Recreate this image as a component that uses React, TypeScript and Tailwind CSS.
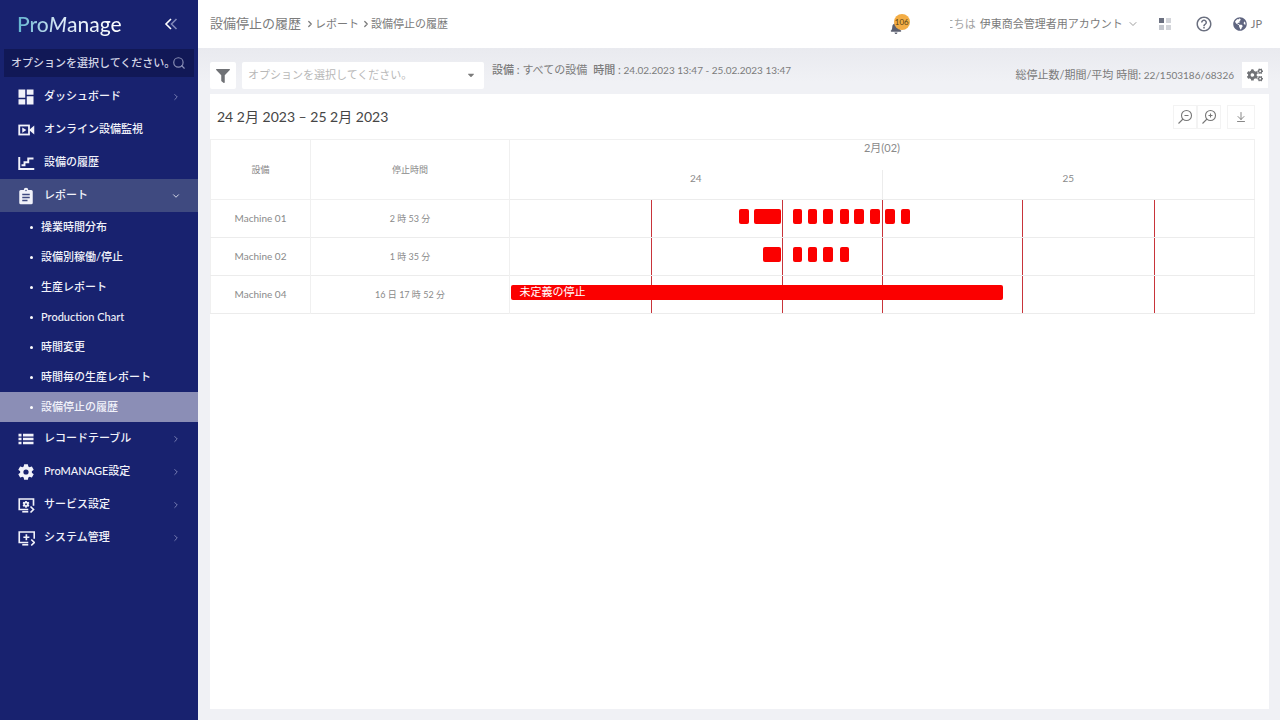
import React from 'react';
import { ArrowDownToLine, ChevronDown, ChevronRight, Search } from 'lucide-react';
import { FaBell, FaCaretDown, FaCogs, FaFilter, FaGlobeAmericas } from 'react-icons/fa';
import { MdHelpOutline } from 'react-icons/md';

type Icon = React.ComponentType<{ className?: string }>;

const DashboardIcon: Icon = ({ className }) => (
  <svg viewBox="0 0 24 24" className={className} fill="currentColor">
    <path d="M2 2h9v11H2zM13 2h9v7h-9zM2 15h9v7H2zM13 11h9v11h-9z" />
  </svg>
);

const CameraIcon: Icon = ({ className }) => (
  <svg viewBox="0 0 24 24" className={className} fill="none" stroke="currentColor" strokeWidth="2.4">
    <rect x="3" y="6" width="13" height="12" />
    <path d="M7 8.5v7l5.5-3.5z" fill="currentColor" stroke="none" />
    <path d="M16 12l7-6v12z" fill="currentColor" stroke="none" />
  </svg>
);

const StepsIcon: Icon = ({ className }) => (
  <svg viewBox="0 0 24 24" className={className} fill="none" stroke="currentColor" strokeWidth="2.6">
    <path d="M3 4v16h20" />
    <path d="M6 15h4v-4h5V6h7" />
  </svg>
);

const ClipboardIcon: Icon = ({ className }) => (
  <svg viewBox="0 0 24 24" className={className}>
    <path d="M5 4h4a3 3 0 016 0h4q2 0 2 2v15q0 2-2 2H5q-2 0-2-2V6q0-2 2-2z" fill="currentColor" />
    <path d="M7 10h10M7 14h10M7 18h7" fill="none" stroke="#3f4a80" strokeWidth="2" />
    <circle cx="12" cy="4.500" r="1" fill="#3f4a80" />
  </svg>
);

const ListIcon: Icon = ({ className }) => (
  <svg viewBox="0 0 24 24" className={className} fill="currentColor">
    <path d="M2 5h4v3.500H2zM8 5h14v3.500H8zM2 10.300h4v3.500H2zM8 10.300h14v3.500H8zM2 15.600h4v3.500H2zM8 15.600h14v3.500H8z" />
  </svg>
);

const GearIcon: Icon = ({ className }) => (
  <svg viewBox="1 1 22 22" className={className} fill="currentColor">
    <path d="M19.14 12.94c.04-.3.06-.61.06-.94s-.02-.64-.07-.94l2.03-1.58a.49.49 0 00.12-.61l-1.92-3.32a.49.49 0 00-.59-.22l-2.39.96a7 7 0 00-1.62-.94l-.36-2.54a.48.48 0 00-.48-.41h-3.84a.47.47 0 00-.47.41l-.36 2.54c-.59.24-1.13.57-1.62.94l-2.39-.96a.48.48 0 00-.59.22L2.740 8.870a.48.48 0 00.12.61l2.030 1.580a7 7 0 000 1.880l-2.030 1.580a.49.49 0 00-.12.61l1.920 3.320c.12.22.37.29.59.22l2.390-.96c.5.38 1.030.7 1.620.94l.36 2.540c.05.24.24.41.48.41h3.840c.24 0 .44-.17.47-.41l.36-2.540a7 7 0 001.620-.94l2.390.96c.22.08.47 0 .59-.22l1.920-3.320a.48.48 0 00-.12-.61zM12 15.200a3.200 3.200 0 110-6.400 3.200 3.200 0 010 6.400z" />
  </svg>
);

const ScreenGearIcon: Icon = ({ className }) => (
  <svg viewBox="0 0 24 24" className={className} fill="none" stroke="currentColor" strokeWidth="2.2">
    <path d="M15 18H3V4h19v9" />
    <path d="M7 21h8" />
    <circle cx="12" cy="11" r="2.4" strokeWidth="2.4" />
    <path d="M12 6.500v2M12 13.500v2M8 8.700l1.700 1M14.300 12.300l1.700 1M8 13.300l1.700-1M14.300 9.700l1.700-1" />
    <path d="M18 14l4 4-4 4" />
  </svg>
);

const ScreenPlusIcon: Icon = ({ className }) => (
  <svg viewBox="0 0 24 24" className={className} fill="none" stroke="currentColor" strokeWidth="2.2">
    <path d="M15 18H3V4h20v9" />
    <path d="M7 21h8" />
    <path d="M12.500 7v8M8.500 11h8" />
    <path d="M19 14l4 4-4 4" />
  </svg>
);

const ZoomIcon = ({ plus }: { plus?: boolean }) => (
  <svg viewBox="0 0 16 16" className="h-4 w-4" fill="none" stroke="currentColor" strokeWidth="1.1">
    <circle cx="9.500" cy="6.500" r="5" />
    <path d="M6 10l-4.500 4.500M7.500 6.500h4" />
    {plus && <path d="M9.500 4.500v4" />}
  </svg>
);

interface MenuItem {
  icon: Icon;
  label: string;
  arrow?: boolean;
  children?: string[];
}

const menu: MenuItem[] = [
  { icon: DashboardIcon, label: 'ダッシュボード', arrow: true },
  { icon: CameraIcon, label: 'オンライン設備監視' },
  { icon: StepsIcon, label: '設備の履歴' },
  {
    icon: ClipboardIcon,
    label: 'レポート',
    children: [
      '操業時間分布',
      '設備別稼働/停止',
      '生産レポート',
      'Production Chart',
      '時間変更',
      '時間毎の生産レポート',
      '設備停止の履歴',
    ],
  },
  { icon: ListIcon, label: 'レコードテーブル', arrow: true },
  { icon: GearIcon, label: 'ProMANAGE設定', arrow: true },
  { icon: ScreenGearIcon, label: 'サービス設定', arrow: true },
  { icon: ScreenPlusIcon, label: 'システム管理', arrow: true },
];

const activeReport = '設備停止の履歴';

interface Stop {
  start: number;
  length: number;
  label?: string;
}

// Start and length are in percent of the visible time range
const machines: { name: string; total: string; stops: Stop[] }[] = [
  {
    name: 'Machine 01',
    total: '2 時 53 分',
    stops: [
      { start: 30.8, length: 1.3 },
      { start: 32.8, length: 3.6 },
      { start: 38.0, length: 1.3 },
      { start: 40.0, length: 1.3 },
      { start: 42.1, length: 1.3 },
      { start: 44.3, length: 1.3 },
      { start: 46.3, length: 1.3 },
      { start: 48.4, length: 1.3 },
      { start: 50.4, length: 1.3 },
      { start: 52.5, length: 1.3 },
    ],
  },
  {
    name: 'Machine 02',
    total: '1 時 35 分',
    stops: [
      { start: 34.0, length: 2.4 },
      { start: 38.0, length: 1.3 },
      { start: 40.0, length: 1.3 },
      { start: 42.1, length: 1.3 },
      { start: 44.3, length: 1.3 },
    ],
  },
  {
    name: 'Machine 04',
    total: '16 日 17 時 52 分',
    stops: [{ start: 0.2, length: 66.1, label: '未定義の停止' }],
  },
];

const shiftLines = [18.9, 36.5, 50.0, 68.8, 86.5];

const Sidebar = () => (
  <aside className="w-[198px] shrink-0 bg-[#18226f] text-[11px] font-medium text-[#f1f2fa]">
    <div className="flex h-12 items-center justify-between pr-5 pl-[17px]">
      <a
        href="#home"
        className="bg-gradient-to-r from-[#5fb4cf] via-[#d5e6f5] via-40% to-white bg-clip-text text-[21px] leading-7 font-medium text-transparent"
      >
        Pro<span className="italic">M</span>anage
      </a>
      <button aria-label="メニューを閉じる">
        <svg viewBox="0 0 14 12" className="h-3 w-3.5" fill="none" strokeWidth="1.600">
          <path d="M7 1L2 6l5 5" stroke="#ffffff" />
          <path d="M12.500 1l-5 5 5 5" stroke="#7f86b8" />
        </svg>
      </button>
    </div>

    <div className="mx-1 mt-px mb-[3px] flex h-7 items-center bg-[#111856] pr-2 pl-[7px]">
      <input
        type="text"
        aria-label="メニュー検索"
        placeholder="オプションを選択してください。"
        className="min-w-0 flex-1 bg-transparent outline-none placeholder:text-[#d3d5e6]"
      />
      <Search className="h-3.5 w-3.5 shrink-0 text-[#8a8fb5]" />
    </div>

    <nav>
      {menu.map((item) => (
        <div key={item.label}>
          <a
            href="#menu"
            className={`flex h-[33px] items-center pr-[17px] pl-[17px] ${item.children ? 'bg-[#3f4a80]' : ''}`}
          >
            <item.icon className="mr-[9px] h-[18px] w-[18px]" />
            <span className="flex-1">{item.label}</span>
            {item.arrow && <ChevronRight className="h-2.5 w-2.5 text-[#8a90c0]" />}
            {item.children && <ChevronDown className="h-2.5 w-2.5" />}
          </a>
          {item.children && (
            <ul>
              {item.children.map((child) => (
                <li key={child}>
                  <a
                    href="#report"
                    className={`flex h-[30px] items-center pl-[30px] ${child === activeReport ? 'bg-[#8b8eb6]' : ''}`}
                  >
                    <span className="mr-2 h-[3px] w-[3px] rounded-full bg-white" />
                    {child}
                  </a>
                </li>
              ))}
            </ul>
          )}
        </div>
      ))}
    </nav>
  </aside>
);

const TopBar = () => (
  <header className="flex h-12 items-center bg-white pr-[18px] pl-3">
    <h1 className="mr-1 text-[13px]">設備停止の履歴</h1>
    <nav className="flex items-center">
      <ChevronRight className="h-2.5 w-2.5" strokeWidth={3} />
      <a href="#reports">レポート</a>
      <ChevronRight className="ml-0.5 h-2.5 w-2.5" strokeWidth={3} />
      <a href="#history">設備停止の履歴</a>
    </nav>

    <div className="ml-auto flex items-center">
      <button aria-label="通知" className="relative mr-10 flex h-5 w-5 items-end">
        <FaBell className="h-3 w-3 text-[#5c6070]" />
        <span className="absolute top-0 right-0 flex h-4 w-4 items-center justify-center rounded-full bg-[#f3ad45] text-[8px] text-[#5a4415]">
          106
        </span>
      </button>
      <button className="mr-5 flex items-center gap-1">
        <span className="flex w-[26px] justify-end overflow-hidden whitespace-nowrap text-[#a3a3a3]">こんにちは</span>
        <span>伊東商会管理者用アカウント</span>
        <ChevronDown className="h-3 w-3" strokeWidth={1.5} />
      </button>
      <button aria-label="アプリ" className="mr-6 grid grid-cols-2 gap-0.5">
        <span className="h-[5px] w-[5px] bg-[#6b7080]" />
        <span className="h-[5px] w-[5px] bg-[#d3d5da]" />
        <span className="h-[5px] w-[5px] bg-[#c4c7ce]" />
        <span className="h-[5px] w-[5px] bg-[#d3d5da]" />
      </button>
      <button aria-label="ヘルプ" className="mr-5">
        <MdHelpOutline className="h-[18px] w-[18px] text-[#6b7080]" />
      </button>
      <button className="flex items-center gap-1">
        <FaGlobeAmericas className="h-3.5 w-3.5 text-[#5f6580]" />
        JP
      </button>
    </div>
  </header>
);

const FilterBar = () => (
  <div className="flex gap-1.5 pr-px">
    <button aria-label="フィルター" className="flex h-[27px] w-[26px] items-center justify-center rounded-xs bg-white">
      <FaFilter className="h-3.5 w-3.5 text-[#707276]" />
    </button>
    <div className="relative w-[242px]">
      <select
        aria-label="オプション"
        defaultValue=""
        className="h-[27px] w-full appearance-none rounded-xs bg-white pl-1.5 text-[#b8b8b8] outline-none"
      >
        <option value="">オプションを選択してください。</option>
      </select>
      <FaCaretDown className="pointer-events-none absolute top-2 right-2 h-2.5 w-2.5" />
    </div>
    <p className="ml-0.5 flex gap-1.5 leading-4">
      <span>
        <b className="font-medium">設備 :</b> すべての設備
      </span>
      <span>
        <b className="font-medium">時間 :</b> <span className="text-[10px]">24.02.2023 13:47 - 25.02.2023 13:47</span>
      </span>
    </p>
    <p className="ml-auto self-center">
      総停止数/期間/平均 時間: <span className="text-[10px]">22/1503186/68326</span>
    </p>
    <button aria-label="設定" className="ml-0.5 flex h-[26px] w-[26px] items-center justify-center bg-white">
      <FaCogs className="h-4 w-4 text-[#707276]" />
    </button>
  </div>
);

const StopTable = () => (
  <table className="w-full table-fixed border-collapse border border-[#f0f0f0] text-center">
    <colgroup>
      <col className="w-[100px]" />
      <col className="w-[199px]" />
      <col />
      <col />
    </colgroup>
    <thead className="text-[10px] leading-4 text-[#8a8a8a]">
      <tr className="h-[30px]">
        <th rowSpan={2} className="border border-[#f0f0f0] text-[9px] font-normal">設備</th>
        <th rowSpan={2} className="border border-[#f0f0f0] text-[9px] font-normal">停止時間</th>
        <th colSpan={2} className="align-top text-[11px] font-normal">2月(02)</th>
      </tr>
      <tr className="h-[30px]">
        <th className="border-r border-b border-[#ececec] align-top font-normal">24</th>
        <th className="border-b border-[#ececec] align-top font-normal">25</th>
      </tr>
    </thead>
    <tbody>
      {machines.map((machine) => (
        <tr key={machine.name} className="h-[38px] border-b border-[#ececec] text-[9px] text-[#8a8a8a]">
          <td className="border-r border-[#f0f0f0] text-[10px]">{machine.name}</td>
          <td className="border-r border-[#f0f0f0]">{machine.total}</td>
          <td colSpan={2} className="relative">
            {shiftLines.map((line) => (
              <span key={line} className="absolute inset-y-0 w-px bg-[#c8343a]" style={{ left: `${line}%` }} />
            ))}
            {machine.stops.map((stop) => (
              <span
                key={stop.start}
                className="absolute top-[9px] flex h-[15px] items-center rounded-xs bg-[#fb0000] pl-2 text-[11px] whitespace-nowrap text-white"
                style={{ left: `${stop.start}%`, width: `${stop.length}%` }}
              >
                {stop.label}
              </span>
            ))}
          </td>
        </tr>
      ))}
    </tbody>
  </table>
);

const toolButton = 'flex h-6 w-6 items-center justify-center border border-[#f3f3f3] text-[#777777]';

export default function App() {
  return (
    <div className="flex min-h-screen bg-[#f0f1f5] font-[Lato,'Noto_Sans_CJK_JP',sans-serif] text-[11px] text-[#7b7b7b]">
      <Sidebar />
      <div className="flex min-w-0 flex-1 flex-col">
        <TopBar />
        <main className="flex flex-1 flex-col gap-[5px] bg-gradient-to-b from-[#e9eaef] to-[#f0f1f5] to-5% pt-3.5 pr-[11px] pb-[11px] pl-3">
          <FilterBar />
          <section className="flex-1 bg-white pr-3.5">
            <div className="flex h-[45px] items-center pl-[7px]">
              <h2 className="flex-1 text-[14px] text-[#454545]">24 2月 2023 – 25 2月 2023</h2>
              <button aria-label="縮小" className={toolButton}>
                <ZoomIcon />
              </button>
              <button aria-label="拡大" className={toolButton}>
                <ZoomIcon plus />
              </button>
              <button aria-label="ダウンロード" className="ml-1.5 flex h-6 w-7 items-center justify-center border border-[#f3f3f3]">
                <ArrowDownToLine className="h-3 w-3" strokeWidth={1.8} />
              </button>
            </div>
            <StopTable />
          </section>
        </main>
      </div>
    </div>
  );
}
